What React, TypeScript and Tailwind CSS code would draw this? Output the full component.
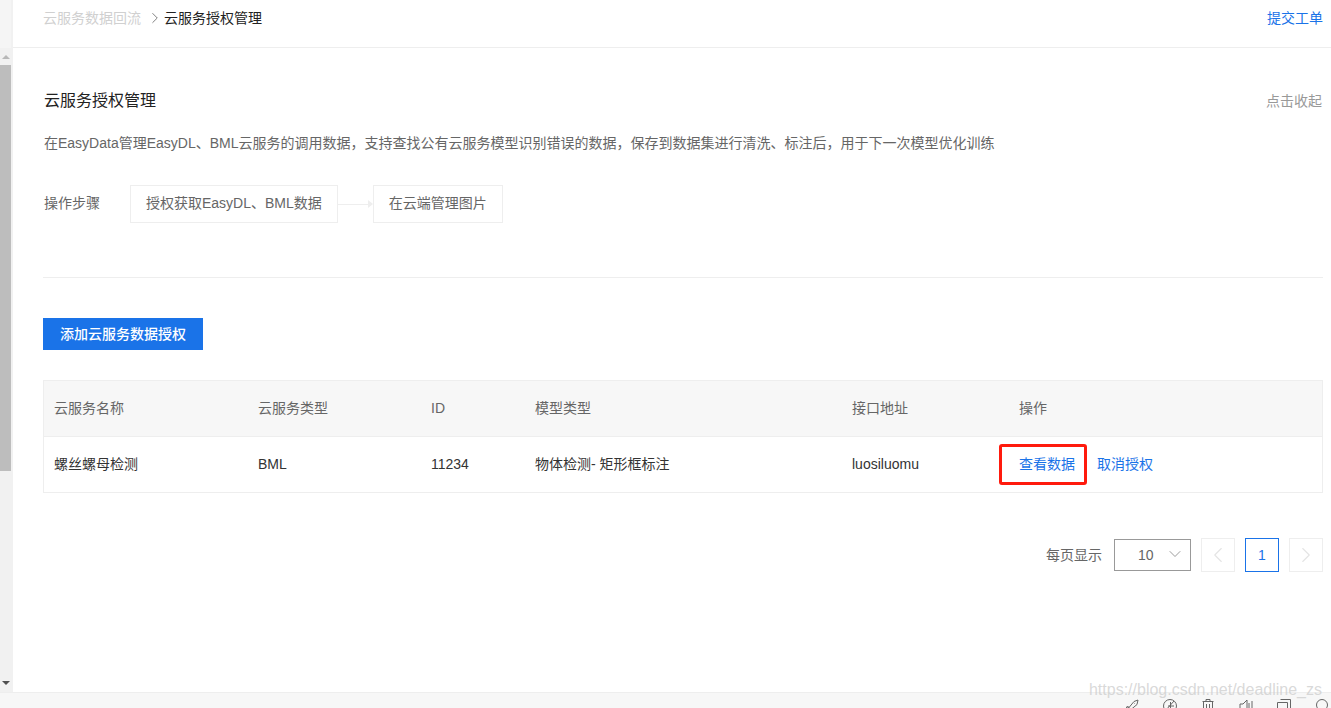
import type { ReactNode } from 'react';
import { ChevronDown, ChevronLeft, ChevronRight } from 'lucide-react';

const columns = 'grid grid-cols-[204px_173px_104px_317px_167px_1fr] items-center';

function ToolIcon({ children }: { children: ReactNode }) {
  return (
    <svg viewBox="0 0 16 16" fill="none" stroke="#666666" strokeWidth="1" className="h-[16px] w-[16px] shrink-0">
      {children}
    </svg>
  );
}

export default function App() {
  return (
    <div className="relative flex h-[708px] w-[1331px] flex-col overflow-hidden bg-white font-['Liberation_Sans','Noto_Sans_CJK_SC',sans-serif] text-[14px] leading-[20px]">
      <div className="flex min-h-0 flex-1">
        {/* scroll rail */}
        <aside className="h-[692px] w-[13px] shrink-0 bg-[#f1f1f1]">
          <div className="flex h-[692px] w-[11px] flex-col">
            <div className="h-[48px] bg-[#f5f5f5]" />
            <div className="flex h-[17px] items-center justify-center">
              <div className="h-0 w-0 border-x-[4px] border-b-[4px] border-x-transparent border-b-[#b8b8b8]" />
            </div>
            <div className="h-[406px] bg-[#bdbdbd]" />
            <div className="flex-1" />
            <div className="flex h-[17px] items-center justify-center pb-[2px]">
              <div className="h-0 w-0 border-x-[4px] border-t-[4px] border-x-transparent border-t-[#505050]" />
            </div>
          </div>
        </aside>

        <main className="min-w-0 flex-1">
          <header className="flex h-[48px] items-start justify-between border-b border-[#eeeeee] pl-[30px] pr-[8px] pt-[8px]">
            <div className="flex items-center">
              <span className="text-[#d0d0d0]">云服务数据回流</span>
              <ChevronRight className="ml-[5px] h-[18px] w-[18px] text-[#666666]" strokeWidth={1.1} />
              <span className="text-[#222222]">云服务授权管理</span>
            </div>
            <a className="text-[#1a73e8]">提交工单</a>
          </header>

          <section className="pl-[31px] pr-[8px]">
            <div className="flex items-center justify-between pt-[41px]">
              <h1 className="text-[16px] leading-[24px] text-[#222222]">云服务授权管理</h1>
              <span className="pr-px text-[#999999]">点击收起</span>
            </div>
            <p className="mt-[20px] text-[#666666]">
              在EasyData管理EasyDL、BML云服务的调用数据，支持查找公有云服务模型识别错误的数据，保存到数据集进行清洗、标注后，用于下一次模型优化训练
            </p>
            <div className="mt-[32px] flex items-center">
              <span className="w-[86px] pb-[2px] text-[#666666]">操作步骤</span>
              <div className="flex h-[38px] items-center border border-[#eeeeee] px-[15px] pb-[2px] text-[#666666]">授权获取EasyDL、BML数据</div>
              <div className="flex w-[35px] items-center">
                <div className="h-px flex-1 bg-[#eeeeee]" />
                <div className="h-0 w-0 border-y-[4px] border-l-[5px] border-y-transparent border-l-[#eeeeee]" />
              </div>
              <div className="flex h-[38px] items-center border border-[#eeeeee] px-[15px] pb-[2px] text-[#666666]">在云端管理图片</div>
            </div>
          </section>

          <div className="ml-[30px] mr-[8px] mt-[54px] h-px bg-[#eeeeee]" />

          <section className="pl-[30px] pr-[8px]">
            <button className="mt-[40px] flex h-[32px] w-[160px] items-center justify-center bg-[#1a73e8] font-medium text-white">添加云服务数据授权</button>

            <div className="mt-[30px] border border-[#eeeeee]">
              <div className={`${columns} h-[56px] border-b border-[#eeeeee] bg-[#f7f7f7] pb-[2px] pl-[10px] text-[#666666]`}>
                <span>云服务名称</span>
                <span>云服务类型</span>
                <span>ID</span>
                <span>模型类型</span>
                <span>接口地址</span>
                <span>操作</span>
              </div>
              <div className={`${columns} h-[55px] pb-[2px] pl-[10px] text-[#333333]`}>
                <span>螺丝螺母检测</span>
                <span>BML</span>
                <span>11234</span>
                <span>物体检测- 矩形框标注</span>
                <span>luosiluomu</span>
                <div className="flex gap-[22px] text-[#1a73e8]">
                  <span>查看数据</span>
                  <span>取消授权</span>
                </div>
              </div>
            </div>

            <div className="mt-[45px] flex items-center justify-end text-[#666666]">
              <span className="mr-[12px]">每页显示</span>
              <div className="mr-[10px] flex h-[32px] w-[77px] items-center justify-between border border-[#999999] pl-[23px] pr-[5px]">
                <span>10</span>
                <ChevronDown className="mt-[-2px] h-[20px] w-[20px] text-[#888888]" strokeWidth={1} />
              </div>
              <div className="flex h-[34px] w-[34px] items-center justify-center border border-[#eeeeee]">
                <ChevronLeft className="h-[26px] w-[26px] text-[#e4e4e4]" strokeWidth={1} />
              </div>
              <div className="mx-[10px] flex h-[34px] w-[34px] items-center justify-center border border-[#1a73e8] text-[#1a73e8]">1</div>
              <div className="flex h-[34px] w-[34px] items-center justify-center border border-[#eeeeee]">
                <ChevronRight className="h-[26px] w-[26px] text-[#e4e4e4]" strokeWidth={1} />
              </div>
            </div>
          </section>
        </main>
      </div>

      {/* bottom toolbar, clipped by the window */}
      <footer className="flex h-[16px] shrink-0 justify-end gap-[22px] overflow-hidden border-t border-[#eeeeee] bg-[#f7f7f7] pr-[1px] pt-[5px]">
        <ToolIcon>
          <path d="M5 9.5 10 3.5 14 2 13 6.5 7 11.5ZM5 9.5 2 10.5 3.5 8ZM7 11.5 6 14 8.5 12.5M10 5.5h.5" />
        </ToolIcon>
        <ToolIcon>
          <circle cx="8" cy="8" r="6.5" />
          <path d="M8.5 4v7M6 8h6M4 12 12 3" />
        </ToolIcon>
        <ToolIcon>
          <path d="M2.5 3.5h11M6 3.5V1.5h4v2M3.5 3.5V15h9V3.5M6.5 6v7M9.5 6v7" />
        </ToolIcon>
        <ToolIcon>
          <path d="M2 6h3l4-4v13l-4-3H2ZM11 5v7M14 3v10" />
        </ToolIcon>
        <ToolIcon>
          <path d="M4.5 1.5h10v10M1.5 4.5h10v10h-10Z" />
        </ToolIcon>
        <ToolIcon>
          <circle cx="8" cy="7" r="5.5" />
          <path d="m12 11 3 3" />
        </ToolIcon>
      </footer>

      {/* annotation drawn over the screenshot */}
      <div className="absolute left-[999px] top-[444px] h-[41px] w-[88px] rounded-[3px] border-[3px] border-[#ff1a0d]" />
      <div className="absolute right-[9px] top-[679px] text-[16px] leading-[22px] text-[#cfcfcf]/80">https://blog.csdn.net/deadline_zs</div>
    </div>
  );
}
